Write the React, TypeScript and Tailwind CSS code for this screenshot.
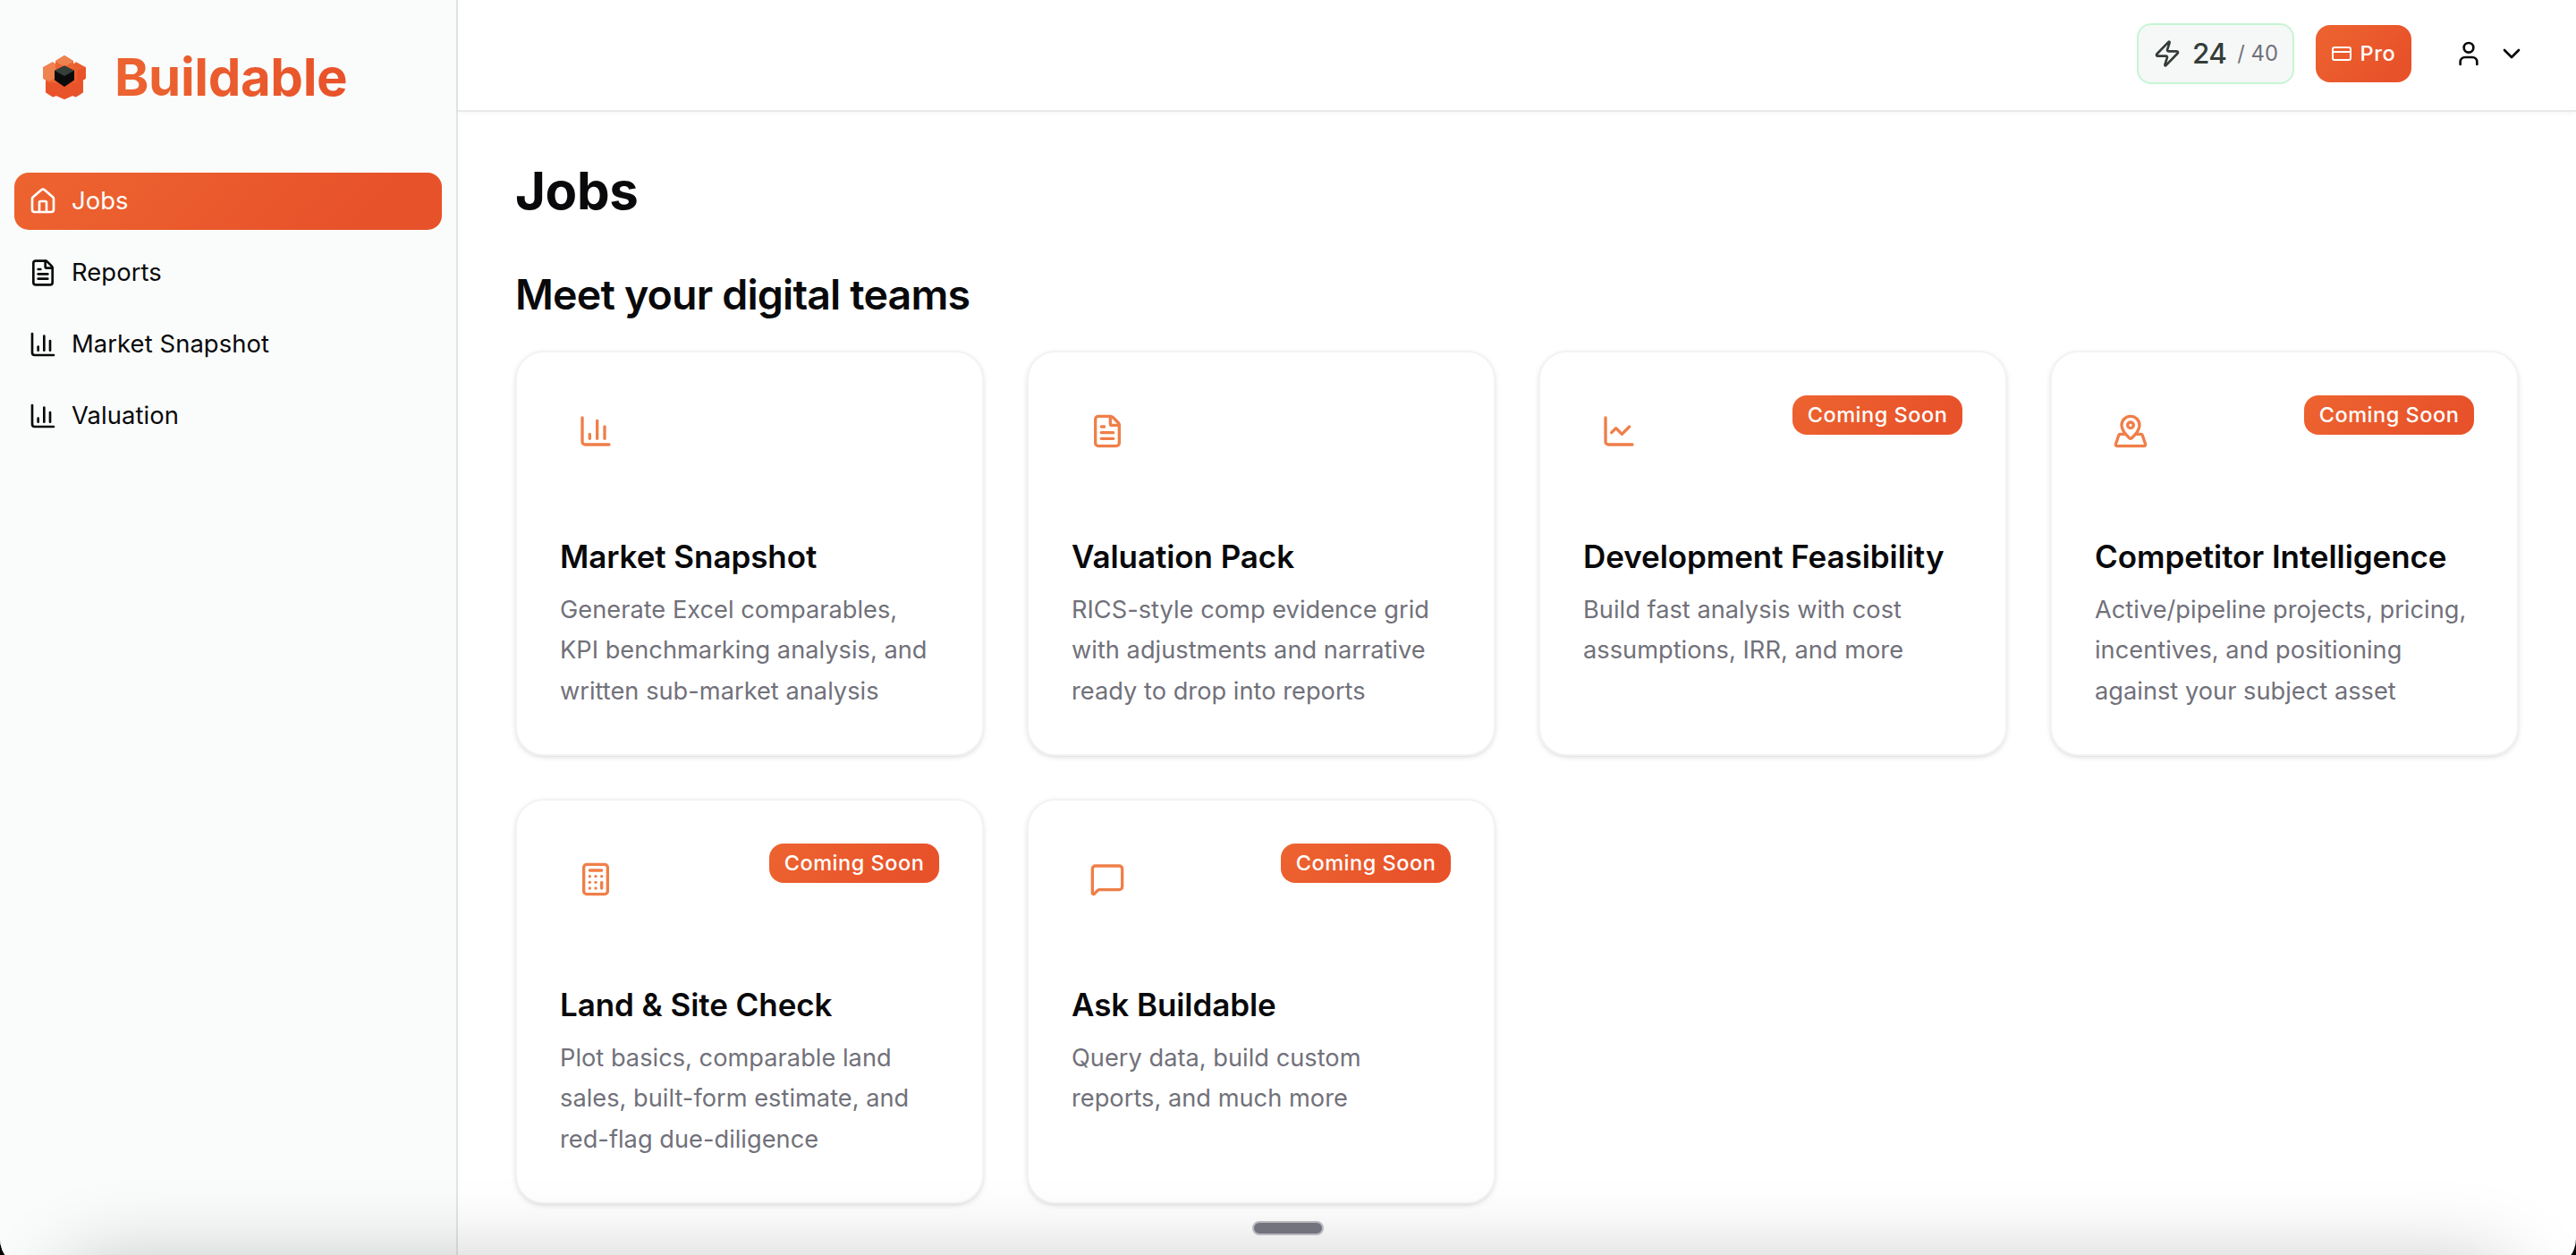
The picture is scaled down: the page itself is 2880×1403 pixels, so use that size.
import { useState } from "react"
import {
  Calculator,
  ChartColumn,
  ChartLine,
  ChevronDown,
  CreditCard,
  FileText,
  House,
  MapPinned,
  MessageSquare,
  User,
  Zap,
  type LucideIcon,
} from "lucide-react"

type Team = {
  title: string
  icon: LucideIcon
  lines: string[]
  soon?: boolean
}

const navItems: { label: string; icon: LucideIcon }[] = [
  { label: "Jobs", icon: House },
  { label: "Reports", icon: FileText },
  { label: "Market Snapshot", icon: ChartColumn },
  { label: "Valuation", icon: ChartColumn },
]

const teams: Team[] = [
  {
    title: "Market Snapshot",
    icon: ChartColumn,
    lines: ["Generate Excel comparables,", "KPI benchmarking analysis, and", "written sub-market analysis"],
  },
  {
    title: "Valuation Pack",
    icon: FileText,
    lines: ["RICS-style comp evidence grid", "with adjustments and narrative", "ready to drop into reports"],
  },
  {
    title: "Development Feasibility",
    icon: ChartLine,
    lines: ["Build fast analysis with cost", "assumptions, IRR, and more"],
    soon: true,
  },
  {
    title: "Competitor Intelligence",
    icon: MapPinned,
    lines: ["Active/pipeline projects, pricing,", "incentives, and positioning", "against your subject asset"],
    soon: true,
  },
  {
    title: "Land & Site Check",
    icon: Calculator,
    lines: ["Plot basics, comparable land", "sales, built-form estimate, and", "red-flag due-diligence"],
    soon: true,
  },
  {
    title: "Ask Buildable",
    icon: MessageSquare,
    lines: ["Query data, build custom", "reports, and much more"],
    soon: true,
  },
]

const Logo = () => (
  <svg viewBox="0 0 50 50" className="size-[50px]" strokeLinejoin="round">
    <g strokeWidth="2">
      {/* lower petals */}
      <path d="M5 30h40v12l-7 4.500-4-1.500-9 4-9-4-4 1.500L5 42z" fill="#e9532a" stroke="#e9532a" />
      {/* right petal */}
      <path d="m33 13 5-3.500 10 5.500v11l-6 4.500H32z" fill="#eb5f2f" stroke="#eb5f2f" />
      <path d="m40 19 8-4v11l-6 4.500-2-1z" fill="#e9532a" stroke="#e9532a" />
      {/* left petal */}
      <path d="m2 15 10-5.500 5 3.500v17.500H8L2 26z" fill="#ed6632" stroke="#ed6632" />
      <path d="m2 15 10-5.500 5 3.500-4 5v8l-5 2.500-6-3z" fill="#ef8350" stroke="#ef8350" />
      {/* top petal */}
      <path d="m16 7.500 9-5.500 9 5.500V15H16z" fill="#ec6431" stroke="#ec6431" />
      <path d="m16 7.500 9-5.500 9 5.500-9 5z" fill="#ef8350" stroke="#ef8350" />
    </g>
    <path d="m25 12.500 11 5.500v10.500L25 36l-11-7.500V18z" fill="#0b0b0c" />
    <path d="m25 12.500 11 5.500-11 6-11-6z" fill="#343f39" />
  </svg>
)

const Sidebar = () => {
  const [active, setActive] = useState("Jobs")
  return (
    <aside className="flex w-[512px] shrink-0 flex-col border-r-2 border-[#e3e4e4] bg-[#fafcfb]">
      <div className="flex h-[172px] items-center gap-[31px] pl-[47px]">
        <Logo />
        <span className="bg-linear-to-r from-[#ec6431] to-[#e8522a] bg-clip-text text-[58.2px] leading-[80px] font-bold tracking-[-0.0068em] text-transparent">
          Buildable
        </span>
      </div>
      <nav className="flex flex-col gap-4 px-4 pt-[21px]">
        {navItems.map(({ label, icon: Icon }) => (
          <button
            key={label}
            onClick={() => setActive(label)}
            className={`flex h-16 w-full items-center gap-4 rounded-[16px] px-4 text-[27.4px] tracking-[0.003em] ${
              active === label ? "bg-linear-135 from-[#ed6430] to-[#e8522a] to-80% text-white" : "text-[#09090b]"
            }`}
          >
            <Icon className="size-8" />
            <span>{label}</span>
          </button>
        ))}
      </nav>
    </aside>
  )
}

const Header = () => (
  <header className="flex h-[125px] shrink-0 items-center justify-end gap-6 border-b-2 border-[#e9e9ea] pr-8 pb-[3px] shadow-[0_2px_4px_rgba(0,0,0,0.04)]">
    <div className="flex h-[68px] w-[176px] items-center rounded-[16px] border-2 border-[#c6f5d3] bg-[#f6f8f7] pl-4 text-[#353d38]">
      <Zap className="size-8" />
      <span className="ml-3 text-[31.5px] font-medium tracking-[-0.02em]">24</span>
      <span className="ml-3 text-[23.8px] text-[#71717a]">/ 40</span>
    </div>
    <button className="flex h-16 w-[107px] items-center justify-center gap-2 rounded-[16px] bg-linear-135 from-[#ed6430] to-[#e8522a] to-80% text-[23.5px] font-[450] tracking-[0.03em] text-white">
      <CreditCard className="size-6" />
      Pro
    </button>
    <button className="flex h-16 w-32 items-center justify-center gap-4 text-[#09090b]">
      <User className="size-8" />
      <ChevronDown className="size-8" />
    </button>
  </header>
)

const TeamCard = ({ title, icon: Icon, lines, soon }: Team) => (
  <div className="h-[453px] rounded-[32px] border-2 border-[#f2f3f3] bg-white p-12 shadow-[0_2px_6px_rgba(0,0,0,0.09),0_2px_4px_-2px_rgba(0,0,0,0.1)]">
    <div className="flex items-start justify-between">
      <div className="p-5">
        <Icon className="size-10 text-[#ef7f49]" />
      </div>
      {soon && (
        <span className="flex h-11 w-[190px] items-center justify-center rounded-[16px] bg-linear-135 from-[#ed6430] to-[#e8522a] to-80% text-[23.5px] font-[450] tracking-[0.022em] text-white">
          Coming Soon
        </span>
      )}
    </div>
    <h3 className="mt-[78px] text-[35px] leading-[45px] font-semibold tracking-[-0.002em] whitespace-nowrap">{title}</h3>
    <p className="mt-[13.5px] text-[27.2px] leading-[45.5px] tracking-[0.001em] whitespace-nowrap text-[#71717a]">
      {lines.map((line) => (
        <span key={line} className="block">{line}</span>
      ))}
    </p>
  </div>
)

export default function App() {
  return (
    <div className="h-[1403px] w-[2880px] overflow-hidden bg-black font-[Inter,'Liberation_Sans',sans-serif] text-[#09090b]">
      {/* the window frame runs a little past the fold, so only part of its rounded corners shows */}
      <div className="relative flex h-[1417px] overflow-hidden rounded-b-[32px] bg-white">
        <Sidebar />
        <div className="flex flex-1 flex-col">
          <Header />
          <main className="px-16 pt-[52px]">
            <h1 className="text-[58.2px] leading-[73px] font-bold tracking-[-0.007em]">Jobs</h1>
            <h2 className="mt-[47px] text-[46.5px] leading-[64px] font-semibold tracking-[-0.0177em]">
              Meet your digital teams
            </h2>
            <div className="mt-[31px] grid grid-cols-4 gap-12">
              {teams.map((team) => (
                <TeamCard key={team.title} {...team} />
              ))}
            </div>
          </main>
        </div>
        {/* dock shade and drag handle */}
        <div className="pointer-events-none absolute top-[1411px] right-[64px] left-[64px] h-40 rounded-[60px] shadow-[0_0_88px_4px_rgba(0,0,0,0.21)]" />
        <div className="absolute top-[1365px] left-[1400px] h-4 w-20 rounded-full border-2 border-[#b9babd] bg-[#73737d]" />
      </div>
    </div>
  )
}
